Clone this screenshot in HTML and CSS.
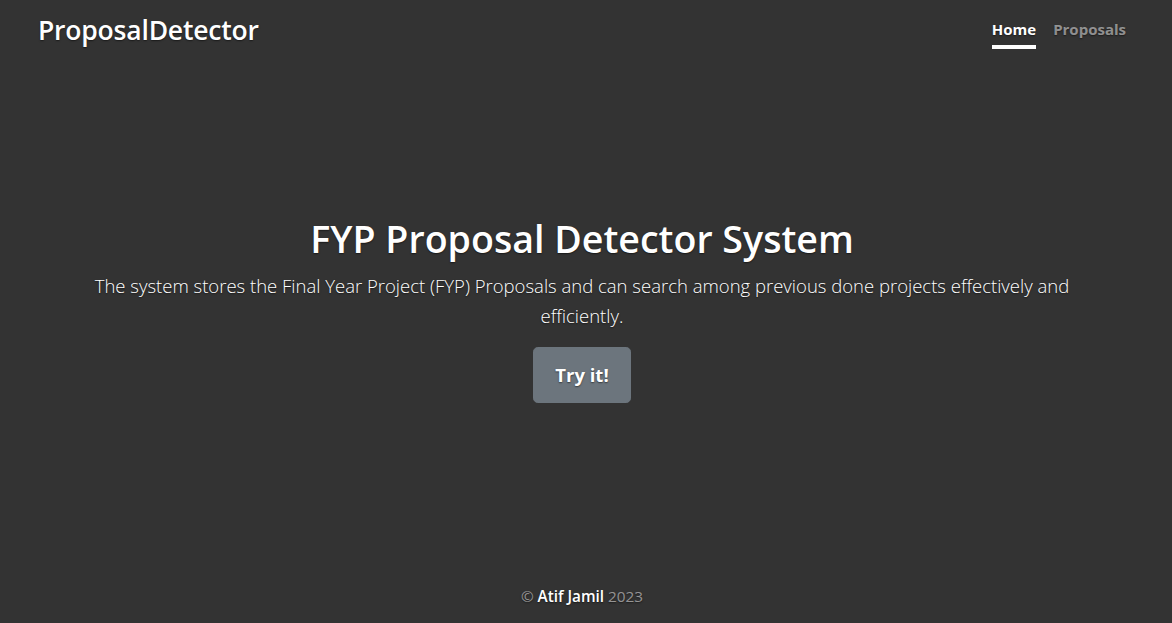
FILE: index.html
```html
<!DOCTYPE html>
<html lang="en">
<head>
<meta charset="utf-8">
<title>ProposalDetector</title>
<link rel="stylesheet" href="styles.css">
</head>
<body>
<div class="cover">
  <header class="masthead">
    <h3 class="brand">ProposalDetector</h3>
    <nav class="nav">
      <a class="nav-link active" href="#">Home</a>
      <a class="nav-link" href="#">Proposals</a>
    </nav>
  </header>
  <main class="hero">
    <h1 class="hero-title">FYP Proposal Detector System</h1>
    <p class="lead">The system stores the Final Year Project (FYP) Proposals and can search among previous done projects effectively and efficiently.</p>
    <a class="btn" href="#">Try it!</a>
  </main>
  <footer class="mastfoot">
    <p>&copy; <span class="author">Atif Jamil</span> 2023</p>
  </footer>
</div>
</body>
</html>
```

FILE: styles.css
```css
html, body {
  height: 100%;
}
body {
  margin: 0;
  background: #333;
  color: #fff;
  font-family: "Open Sans", "Noto Sans", sans-serif;
  text-shadow: 0 0.05rem 0.1rem rgba(0, 0, 0, 0.5);
}
.cover {
  display: flex;
  flex-direction: column;
  height: 100%;
  box-sizing: border-box;
  padding: 0 46px 0 38px;
}
.masthead {
  display: flex;
  justify-content: space-between;
  align-items: flex-start;
  margin-bottom: auto;
  padding-top: 11px;
}
.brand {
  margin: 0 0 2px;
  font-size: 26.5px;
  font-weight: 600;
  line-height: 38px;
  letter-spacing: -0.2px;
}
.nav {
  display: flex;
  gap: 17px;
  margin-top: 2px;
}
.nav-link {
  padding: 4px 0;
  font-size: 15px;
  font-weight: 700;
  line-height: 24px;
  color: rgba(255, 255, 255, 0.5);
  text-decoration: none;
  border-bottom: 4px solid transparent;
}
.nav-link.active {
  color: #fff;
  border-bottom-color: #fff;
}
.hero {
  display: flex;
  flex-direction: column;
  align-items: center;
  text-align: center;
  padding-bottom: 17px;
}
.hero-title {
  margin: 0 0 8px;
  font-size: 37.6px;
  font-weight: 600;
  line-height: 48px;
}
.lead {
  margin: 0 0 16px;
  max-width: 1000px;
  font-size: 18.5px;
  font-weight: 300;
  line-height: 30px;
}
.btn {
  display: inline-block;
  padding: 12px 21px;
  font-size: 18.5px;
  font-weight: 700;
  line-height: 30px;
  color: #fff;
  background: #6c757d;
  border: 1px solid #6c757d;
  border-radius: 4.8px;
  text-decoration: none;
}
.mastfoot {
  margin-top: auto;
  text-align: center;
  color: rgba(255, 255, 255, 0.5);
}
.mastfoot p {
  margin: 0 0 15px;
  font-size: 15.3px;
  line-height: 24px;
}
.author {
  color: #fff;
  font-weight: 600;
}
```
